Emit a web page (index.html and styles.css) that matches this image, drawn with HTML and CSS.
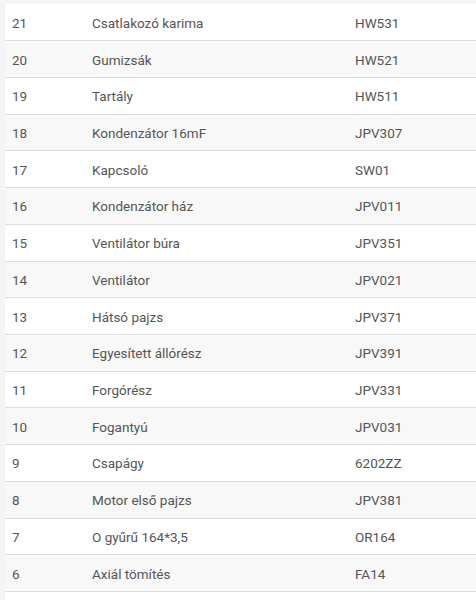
FILE: index.html
```html
<!DOCTYPE html>
<html lang="hu">
<head>
<meta charset="utf-8">
<link rel="stylesheet" href="styles.css">
</head>
<body>
<table class="parts">
<tbody>
<tr><td class="num">21</td><td class="name">Csatlakozó karima</td><td class="code">HW531</td></tr>
<tr><td class="num">20</td><td class="name">Gumizsák</td><td class="code">HW521</td></tr>
<tr><td class="num">19</td><td class="name">Tartály</td><td class="code">HW511</td></tr>
<tr><td class="num">18</td><td class="name">Kondenzátor 16mF</td><td class="code">JPV307</td></tr>
<tr><td class="num">17</td><td class="name">Kapcsoló</td><td class="code">SW01</td></tr>
<tr><td class="num">16</td><td class="name">Kondenzátor ház</td><td class="code">JPV011</td></tr>
<tr><td class="num">15</td><td class="name">Ventilátor búra</td><td class="code">JPV351</td></tr>
<tr><td class="num">14</td><td class="name">Ventilátor</td><td class="code">JPV021</td></tr>
<tr><td class="num">13</td><td class="name">Hátsó pajzs</td><td class="code">JPV371</td></tr>
<tr><td class="num">12</td><td class="name">Egyesített állórész</td><td class="code">JPV391</td></tr>
<tr><td class="num">11</td><td class="name">Forgórész</td><td class="code">JPV331</td></tr>
<tr><td class="num">10</td><td class="name">Fogantyú</td><td class="code">JPV031</td></tr>
<tr><td class="num">9</td><td class="name">Csapágy</td><td class="code">6202ZZ</td></tr>
<tr><td class="num">8</td><td class="name">Motor első pajzs</td><td class="code">JPV381</td></tr>
<tr><td class="num">7</td><td class="name">O gyűrű 164*3,5</td><td class="code">OR164</td></tr>
<tr><td class="num">6</td><td class="name">Axiál tömítés</td><td class="code">FA14</td></tr>
<tr class="tail"><td class="num"></td><td class="name"></td><td class="code"></td></tr>
</tbody>
</table>
</body>
</html>
```

FILE: styles.css
```css
html, body {
  margin: 0;
  padding: 0;
  background: #f4f4f4;
  overflow: hidden;
}
body {
  padding: 4px 0 0 5px;
  font-family: Roboto, "Liberation Sans", sans-serif;
  font-size: 13.5px;
  color: #555555;
}
.parts {
  border-collapse: collapse;
  width: 480px;
}
.parts tr {
  height: 36.73px;
  background: #ffffff;
  border-bottom: 1px solid #dedede;
}
.parts tr:nth-child(even) {
  background: #f8f8f8;
}
.parts td {
  padding: 1px 0 0 7px;
  vertical-align: middle;
  white-space: nowrap;
}
.parts .num { width: 73px; }
.parts .name { width: 256px; }
```
